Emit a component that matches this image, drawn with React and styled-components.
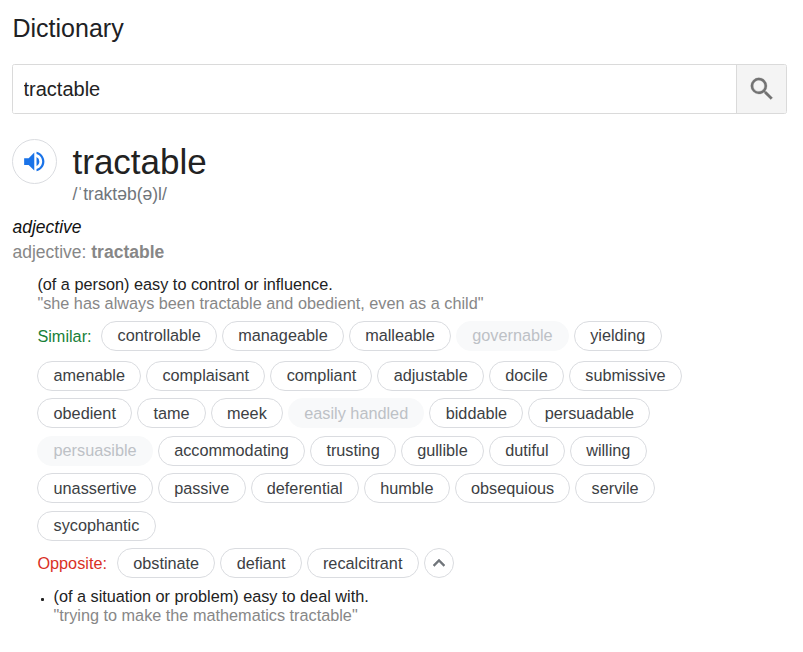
import React from "react";
import styled, { createGlobalStyle } from "styled-components";

const GlobalStyle = createGlobalStyle`
  *, *::before, *::after { box-sizing: border-box; }
  body {
    margin: 0;
    background: #fff;
    color: #202124;
    font-family: "Liberation Sans", Arial, sans-serif;
  }
`;

const Page = styled.main`
  width: 803px;
  height: 652px;
  padding: 13px 16px 0 12.5px;
  overflow: hidden;
`;

const Title = styled.h1`
  margin: 0 0 21px;
  font-size: 25px;
  font-weight: 400;
  line-height: 30px;
`;

const SearchBar = styled.form`
  display: flex;
  height: 50px;
  margin-left: -0.5px;
  border: 1px solid #dadada;
  border-radius: 2.5px;
  overflow: hidden;
`;

const SearchInput = styled.input`
  flex: 1;
  min-width: 0;
  padding: 0 10.5px;
  border: 0;
  outline: 0;
  color: #222;
  background: #fff;
  font: 20px "Liberation Sans", Arial, sans-serif;
`;

const SearchButton = styled.button`
  display: flex;
  align-items: center;
  justify-content: center;
  width: 50px;
  padding: 0;
  border: 0;
  border-left: 1px solid #dadada;
  background: #f4f4f4;
  color: #737373;
`;

const Entry = styled.header`
  display: flex;
  margin-top: 25px;
`;

const Speaker = styled.button`
  display: flex;
  align-items: center;
  justify-content: center;
  width: 45px;
  height: 45px;
  margin: 0 15.5px 0 -0.5px;
  padding: 0;
  border: 1px solid #dadce0;
  border-radius: 50%;
  background: #fff;
  color: #1a73e8;
`;

const Word = styled.div`
  font-size: 35px;
  line-height: 45px;
  color: #222;
`;

const Phonetic = styled.div`
  font-size: 17.5px;
  line-height: 20px;
  color: #70757a;
`;

const PartOfSpeech = styled.div`
  margin-top: 13px;
  font-size: 17.5px;
  font-style: italic;
  line-height: 21px;
  color: #111;
`;

const Forms = styled.div`
  margin-top: 4px;
  font-size: 17.5px;
  line-height: 21px;
  color: #878787;
`;

const Sense = styled.section`
  width: 715px;
  margin: 11.5px 0 0 24.9px;
`;

const Definition = styled.div`
  font-size: 16.25px;
  line-height: 19px;
  color: #222;
`;

const Example = styled(Definition)`
  color: #878787;
`;

const Chips = styled.div`
  display: flex;
  flex-wrap: wrap;
  align-items: flex-start;
  column-gap: 5px;
  margin-top: ${(p) => p.$top || 0}px;
  margin-left: -0.1px;
`;

const Label = styled.span`
  height: 30px;
  margin: 0 ${(p) => p.$space}px ${(p) => p.$gap}px 0.1px;
  font-size: 16.25px;
  line-height: 30px;
  color: ${(p) => p.$color};
`;

const Chip = styled.span`
  height: 30px;
  margin-bottom: 7.5px;
  padding: 0.6px 15.25px 0;
  border: 1px solid ${(p) => (p.$muted ? "#f8f9fa" : "#dadce0")};
  border-radius: 15px;
  background: ${(p) => (p.$muted ? "#f8f9fa" : "#fff")};
  color: ${(p) => (p.$muted ? "#bdc1c6" : "#3c4043")};
  font-size: 16.25px;
  line-height: 27.5px;
  white-space: nowrap;
`;

const Collapse = styled.button`
  display: flex;
  align-items: center;
  justify-content: center;
  width: 30px;
  height: 30px;
  padding: 0;
  border: 1px solid #dadce0;
  border-radius: 50%;
  background: #fff;
  color: #70757a;
`;

const SubSense = styled.div`
  display: flex;
  margin-top: 1px;
`;

const Bullet = styled.span`
  flex: none;
  width: 3px;
  height: 3px;
  margin: 11px 9.5px 0 3.6px;
  border-radius: 1px;
  background: #222;
`;

const similar = [
  "controllable", "manageable", "malleable", "governable", "yielding",
  "amenable", "complaisant", "compliant", "adjustable", "docile", "submissive",
  "obedient", "tame", "meek", "easily handled", "biddable", "persuadable",
  "persuasible", "accommodating", "trusting", "gullible", "dutiful", "willing",
  "unassertive", "passive", "deferential", "humble", "obsequious", "servile",
  "sycophantic",
];
const muted = new Set(["governable", "easily handled", "persuasible"]);
const opposite = ["obstinate", "defiant", "recalcitrant"];

export default function App() {
  return (
    <>
      <GlobalStyle />
      <Page>
        <Title>Dictionary</Title>
        <SearchBar onSubmit={(e) => e.preventDefault()}>
          <SearchInput defaultValue="tractable" aria-label="Word" />
          <SearchButton aria-label="Search">
            <svg width="30" height="30" viewBox="0 0 24 24" fill="currentColor" stroke="currentColor" strokeWidth="0.2">
              <path d="M15.5 14h-.79l-.28-.27A6.471 6.471 0 0 0 16 9.5 6.5 6.5 0 1 0 9.5 16c1.61 0 3.09-.59 4.23-1.57l.27.28v.79l5 4.99L20.49 19l-4.99-5zm-6 0C7.01 14 5 11.99 5 9.5S7.01 5 9.5 5 14 7.01 14 9.5 11.99 14 9.5 14z" />
            </svg>
          </SearchButton>
        </SearchBar>
        <Entry>
          <Speaker aria-label="Listen">
            <svg width="27" height="27" viewBox="0.2 0 24 24" fill="currentColor">
              <path d="M3 9v6h4l5 5V4L7 9H3zm13.5 3A4.5 4.5 0 0 0 14 7.97v8.05c1.48-.73 2.5-2.25 2.5-4.02zM14 3.23v2.06c2.89.86 5 3.54 5 6.71s-2.11 5.85-5 6.71v2.06c4.01-.91 7-4.49 7-8.77s-2.99-7.86-7-8.77z" />
            </svg>
          </Speaker>
          <div>
            <Word>tractable</Word>
            <Phonetic>/ˈtraktəb(ə)l/</Phonetic>
          </div>
        </Entry>
        <PartOfSpeech>adjective</PartOfSpeech>
        <Forms>adjective: <b>tractable</b></Forms>
        <Sense>
          <Definition>(of a person) easy to control or influence.</Definition>
          <Example>"she has always been tractable and obedient, even as a child"</Example>
          <Chips $top={8}>
            <Label $color="#188038" $space={4.8} $gap={10}>Similar:</Label>
            {similar.map((w) => (
              <Chip key={w} $muted={muted.has(w)}>{w}</Chip>
            ))}
          </Chips>
          <Chips>
            <Label $color="#d93025" $space={5} $gap={7.5}>Opposite:</Label>
            {opposite.map((w) => <Chip key={w}>{w}</Chip>)}
            <Collapse aria-label="Show less">
              <svg width="24" height="24" viewBox="0 0 24 24" fill="currentColor" stroke="currentColor" strokeWidth="0.5">
                <path d="M12 8l-6 6 1.41 1.41L12 10.83l4.59 4.58L18 14z" />
              </svg>
            </Collapse>
          </Chips>
          <SubSense>
            <Bullet />
            <div>
              <Definition>(of a situation or problem) easy to deal with.</Definition>
              <Example>"trying to make the mathematics tractable"</Example>
            </div>
          </SubSense>
        </Sense>
      </Page>
    </>
  );
}
